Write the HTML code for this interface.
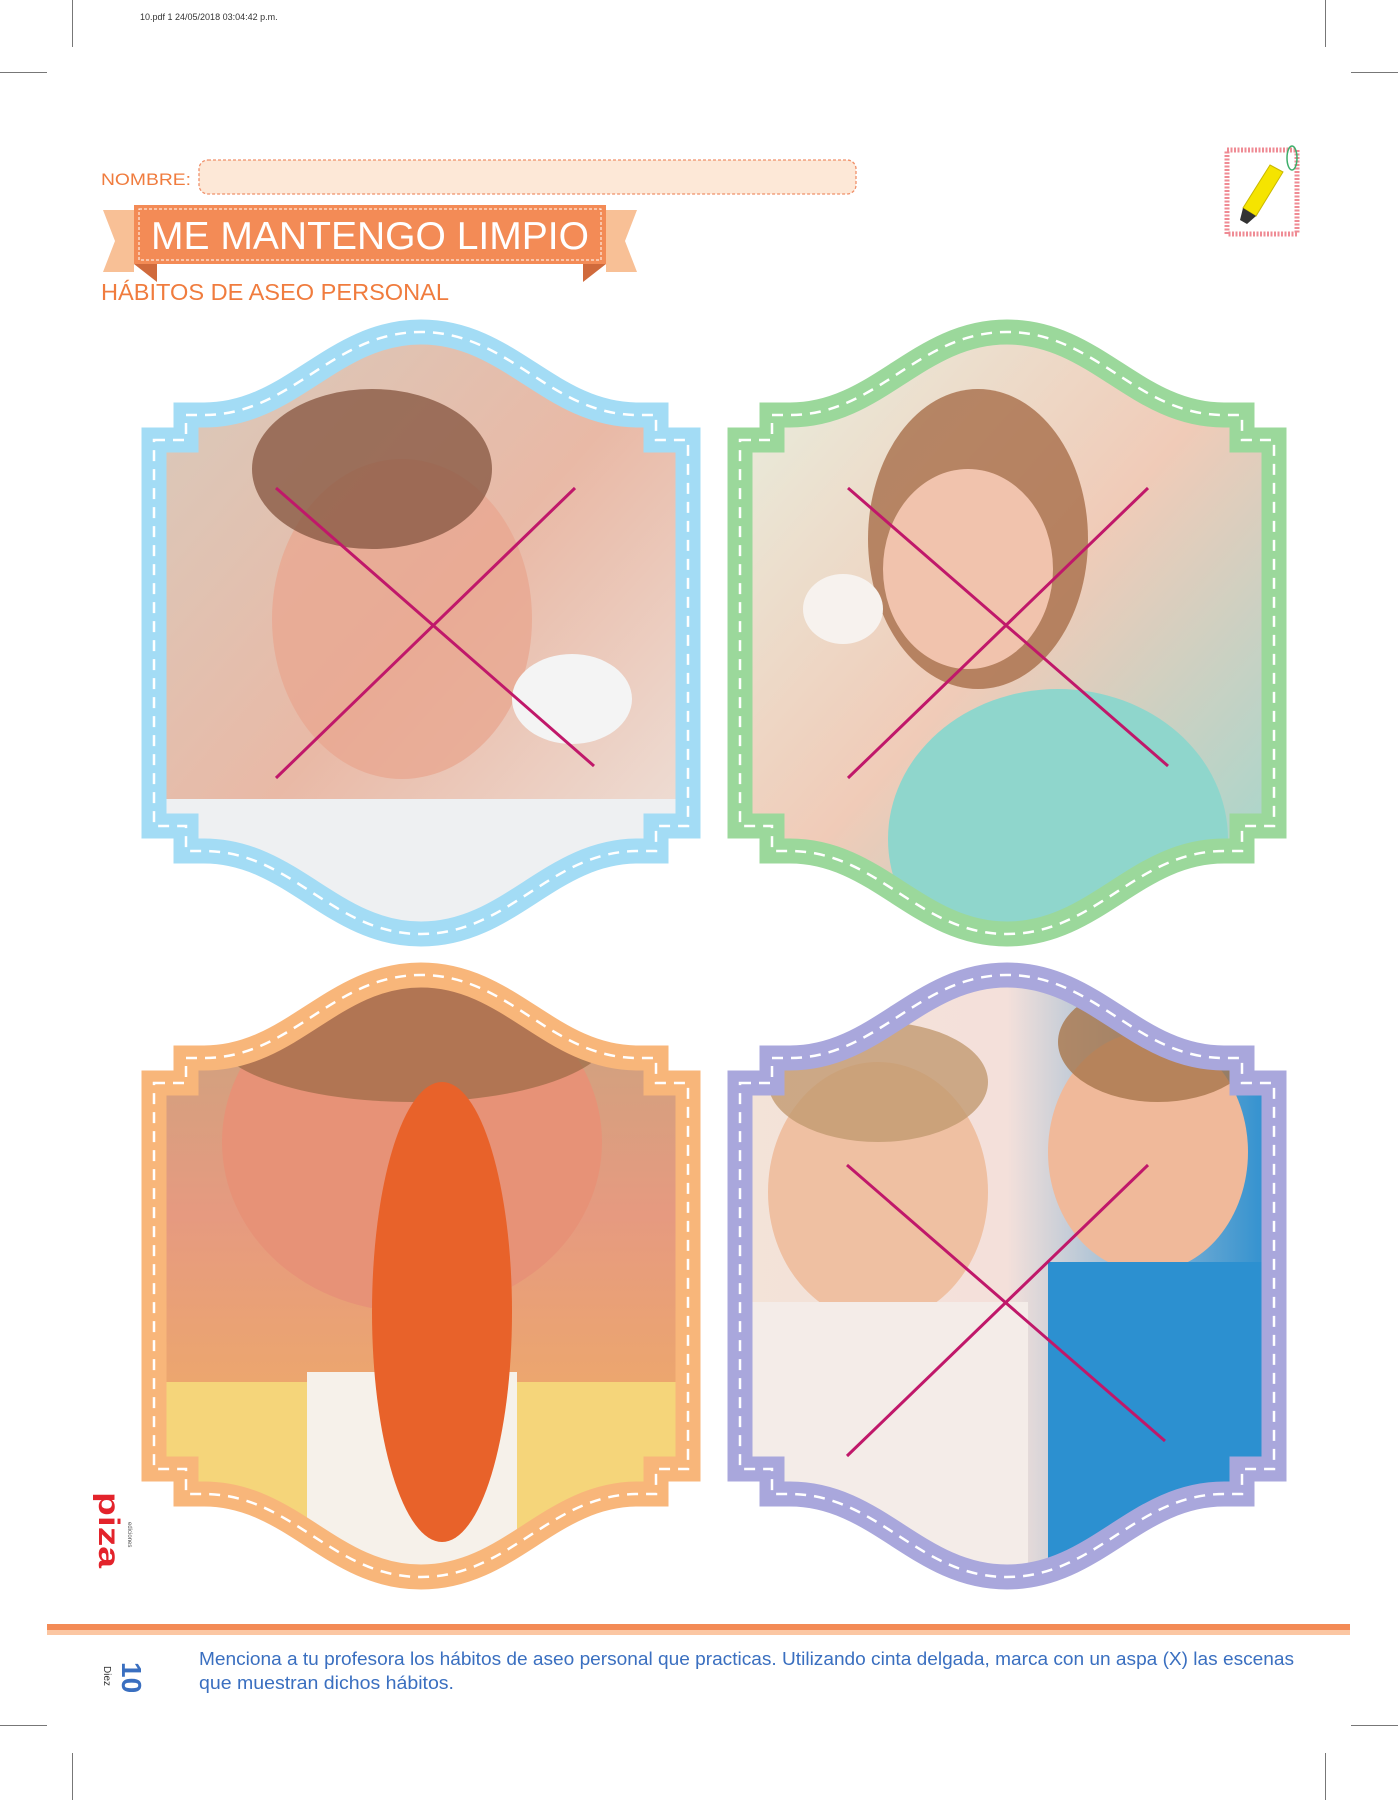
<!DOCTYPE html>
<html><head><meta charset="utf-8"><style>
html,body{margin:0;padding:0;background:#fff;}
body{width:1398px;height:1800px;position:relative;overflow:hidden;font-family:"Liberation Sans",sans-serif;}
.a{position:absolute;}
</style></head><body>
<svg class="a" style="left:0;top:0" width="1398" height="1800" xmlns="http://www.w3.org/2000/svg">
<defs>
<path id="fr" d="M12,121 L44,121 L44,96 L62,96 C150,96 190,13 279,13 C368,13 408,96 496,96 L514,96 L514,121 L546,121 L546,507 L514,507 L514,532 L496,532 C408,532 368,615 279,615 C190,615 150,532 62,532 L44,532 L44,507 L12,507 Z"/>
<clipPath id="cp"><use href="#fr"/></clipPath>
<linearGradient id="g1" x1="0" y1="0" x2="1" y2="1"><stop offset="0" stop-color="#d8cbbd"/><stop offset=".5" stop-color="#e9b9a6"/><stop offset="1" stop-color="#efe6e0"/></linearGradient>
<linearGradient id="g2" x1="0" y1="0" x2="1" y2="1"><stop offset="0" stop-color="#e8f0e0"/><stop offset=".5" stop-color="#f0cbb8"/><stop offset="1" stop-color="#9cd8cf"/></linearGradient>
<linearGradient id="g3" x1="0" y1="0" x2="0" y2="1"><stop offset="0" stop-color="#c9a47e"/><stop offset=".4" stop-color="#e69a80"/><stop offset="1" stop-color="#f3b45a"/></linearGradient>
<linearGradient id="g4" x1="0" y1="0" x2="1" y2="0"><stop offset="0" stop-color="#f3e3d8"/><stop offset=".5" stop-color="#f4e0da"/><stop offset="1" stop-color="#2c8fcf"/></linearGradient>
</defs>
<g stroke="#777" stroke-width="1">
<line x1="72.5" y1="0" x2="72.5" y2="47"/><line x1="0" y1="72.5" x2="47" y2="72.5"/>
<line x1="1325.5" y1="0" x2="1325.5" y2="47"/><line x1="1351" y1="72.5" x2="1398" y2="72.5"/>
<line x1="0" y1="1725.5" x2="47" y2="1725.5"/><line x1="1351" y1="1725.5" x2="1398" y2="1725.5"/>
<line x1="72.5" y1="1753" x2="72.5" y2="1800"/><line x1="1325.5" y1="1753" x2="1325.5" y2="1800"/>
</g>
<text x="140" y="20" font-size="9" fill="#333" font-family="Liberation Sans">10.pdf  1  24/05/2018  03:04:42 p.m.</text>

<g transform="translate(142,319)">
<use href="#fr" fill="url(#g1)"/>
<g clip-path="url(#cp)">
<ellipse cx="260" cy="300" rx="130" ry="160" fill="#e9a891" opacity=".8"/>
<ellipse cx="230" cy="150" rx="120" ry="80" fill="#8a5a45" opacity=".8"/>
<ellipse cx="430" cy="380" rx="60" ry="45" fill="#f4f4f4"/>
<rect x="0" y="480" width="558" height="150" fill="#eef0f2"/>
</g>
<use href="#fr" fill="none" stroke="#a3dcf5" stroke-width="25"/>
<use href="#fr" fill="none" stroke="#fff" stroke-width="2.5" stroke-dasharray="11 8"/>
<g stroke="#c0186a" stroke-width="3"><line x1="134" y1="169" x2="452" y2="447"/><line x1="433" y1="169" x2="134" y2="459"/></g>
</g>

<g transform="translate(728,319)">
<use href="#fr" fill="url(#g2)"/>
<g clip-path="url(#cp)">
<ellipse cx="250" cy="220" rx="110" ry="150" fill="#a86e4a" opacity=".8"/>
<ellipse cx="240" cy="250" rx="85" ry="100" fill="#f1c3ad"/>
<ellipse cx="330" cy="520" rx="170" ry="150" fill="#8fd6cc"/>
<ellipse cx="115" cy="290" rx="40" ry="35" fill="#f7f2ee"/>
</g>
<use href="#fr" fill="none" stroke="#9bd89b" stroke-width="25"/>
<use href="#fr" fill="none" stroke="#fff" stroke-width="2.5" stroke-dasharray="11 8"/>
<g stroke="#c0186a" stroke-width="3"><line x1="120" y1="169" x2="440" y2="447"/><line x1="420" y1="169" x2="120" y2="459"/></g>
</g>

<g transform="translate(142,962)">
<use href="#fr" fill="url(#g3)"/>
<g clip-path="url(#cp)">
<ellipse cx="270" cy="180" rx="190" ry="170" fill="#e79277"/>
<ellipse cx="270" cy="70" rx="200" ry="70" fill="#9a6a45" opacity=".7"/>
<rect x="0" y="420" width="558" height="210" fill="#f5d57a"/>
<rect x="165" y="410" width="210" height="210" fill="#f6f1ea"/>
<ellipse cx="300" cy="350" rx="70" ry="230" fill="#e8622a"/>
</g>
<use href="#fr" fill="none" stroke="#f8b67a" stroke-width="25"/>
<use href="#fr" fill="none" stroke="#fff" stroke-width="2.5" stroke-dasharray="11 8"/>
</g>

<g transform="translate(728,962)">
<use href="#fr" fill="url(#g4)"/>
<g clip-path="url(#cp)">
<ellipse cx="150" cy="230" rx="110" ry="130" fill="#efc0a2"/>
<ellipse cx="150" cy="120" rx="110" ry="60" fill="#c29a70" opacity=".8"/>
<ellipse cx="420" cy="190" rx="100" ry="120" fill="#f0b99a"/>
<ellipse cx="430" cy="80" rx="100" ry="60" fill="#a8764b" opacity=".8"/>
<rect x="320" y="300" width="240" height="330" fill="#2c90d0"/>
<rect x="0" y="340" width="300" height="290" fill="#f4ece8"/>
</g>
<use href="#fr" fill="none" stroke="#a9a7dc" stroke-width="25"/>
<use href="#fr" fill="none" stroke="#fff" stroke-width="2.5" stroke-dasharray="11 8"/>
<g stroke="#c0186a" stroke-width="3"><line x1="119" y1="203" x2="437" y2="479"/><line x1="420" y1="203" x2="119" y2="494"/></g>
</g>

<polygon points="103,210 134,210 134,272 103,272 115,241" fill="#f8c096"/>
<polygon points="606,210 637,210 625,241 637,272 606,272" fill="#f8c096"/>
<polygon points="134,264 157,264 157,282 " fill="#d06a3c"/>
<polygon points="606,264 583,264 583,282" fill="#d06a3c"/>
<rect x="157" y="264" width="426" height="9" fill="#fff"/>
<rect x="134" y="205" width="472" height="59" fill="#f38b56"/>
<rect x="139" y="209" width="462" height="51" fill="none" stroke="#fff" stroke-width="1" stroke-dasharray="3 2"/>
<text x="370" y="249" font-size="39" fill="#fff" text-anchor="middle" font-family="Liberation Sans" textLength="438" lengthAdjust="spacingAndGlyphs">ME MANTENGO LIMPIO</text>

<text x="101" y="185" font-size="17" fill="#f07c3e" textLength="90" lengthAdjust="spacingAndGlyphs">NOMBRE:</text>
<rect x="199" y="160" width="657" height="34" rx="9" fill="#fde8d7" stroke="#f0906a" stroke-width="1.3" stroke-dasharray="3 2"/>
<text x="101" y="300" font-size="23" fill="#f07c3e" textLength="348" lengthAdjust="spacingAndGlyphs">HÁBITOS DE ASEO PERSONAL</text>

<rect x="1227" y="150" width="70" height="84" fill="#fff" stroke="#ef8b94" stroke-width="5" stroke-dasharray="2 1.5"/>
<ellipse cx="1292" cy="158" rx="5" ry="12" fill="none" stroke="#3cae6a" stroke-width="1.5"/>
<polygon points="1270,165 1283,172 1256,216 1243,208" fill="#f5e400" stroke="#c9b800" stroke-width="1"/>
<polygon points="1243,208 1256,216 1247,224 1240,220" fill="#333"/>

<rect x="47" y="1624" width="1303" height="6" fill="#f38b56"/>
<rect x="47" y="1630" width="1303" height="5" fill="#fbc6a2"/>
<text x="199" y="1665" font-size="18" fill="#3a6fc0" textLength="1095" lengthAdjust="spacingAndGlyphs">Menciona a tu profesora los hábitos de aseo personal que practicas. Utilizando cinta delgada, marca con un aspa (X) las escenas</text>
<text x="199" y="1689" font-size="18" fill="#3a6fc0" textLength="255" lengthAdjust="spacingAndGlyphs">que muestran dichos hábitos.</text>
<text transform="translate(122,1662) rotate(90)" font-size="28" font-weight="bold" fill="#3a6fc0">10</text>
<text transform="translate(104,1666) rotate(90)" font-size="10" fill="#333">Diez</text>
<text transform="translate(99,1492) rotate(90)" font-size="30" font-weight="bold" fill="#e3232b" textLength="76" lengthAdjust="spacingAndGlyphs">piza</text>
<text transform="translate(128,1522) rotate(90)" font-size="6" fill="#555">ediciones</text>
</svg>
</body></html>
